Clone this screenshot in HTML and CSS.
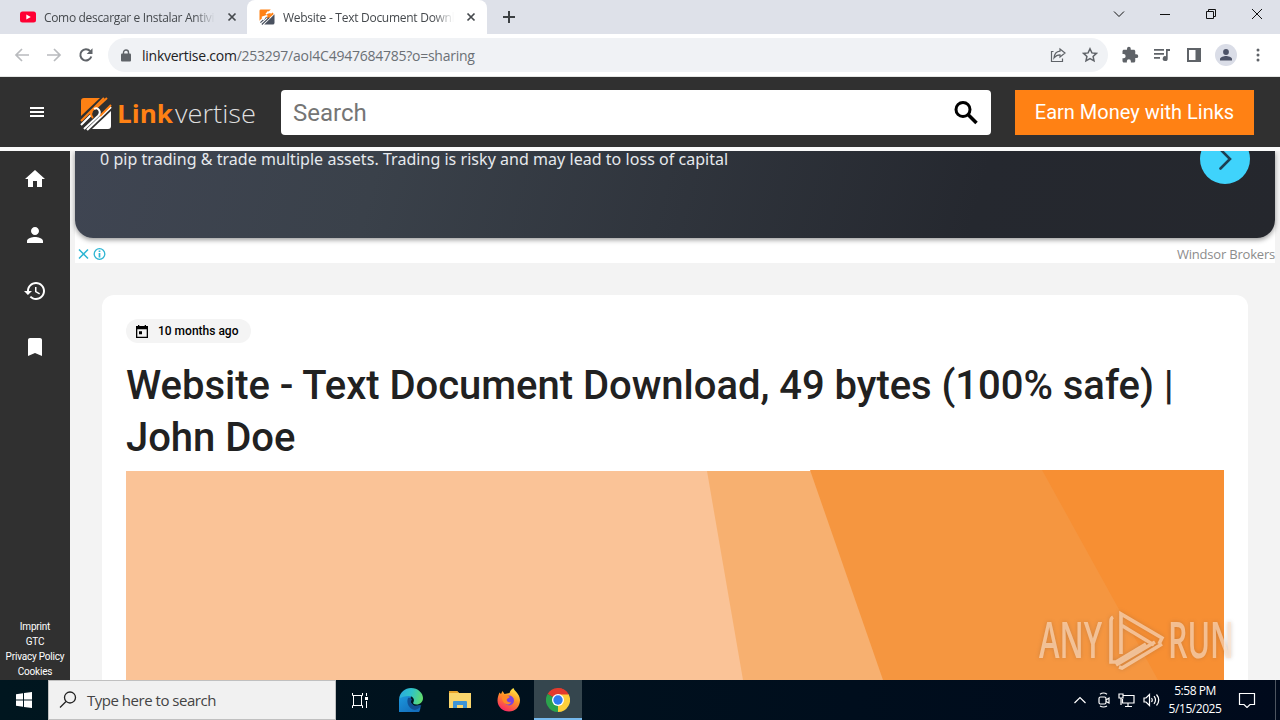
FILE: index.html
```html
<!DOCTYPE html>
<html lang="en">
<head>
    <meta charset="UTF-8">
    <meta name="viewport" content="width=device-width, initial-scale=1.0">
    <title>Website - Text Document Download</title>
    <link rel="stylesheet" href="styles.css">
</head>
<body>
    <div class="screen">
        <!-- Browser tabs -->
        <div class="tabs">
            <div class="tab">
                <svg class="favicon" width="16" height="16" viewBox="0 0 16 16"><rect y="2.500" width="16" height="11" rx="2.500" fill="#ff0033"/><path d="M6.300 5.500v5L10.800 8z" fill="#fff"/></svg>
                <span class="tab-title first-title">Como descargar e Instalar Antiviru</span>
                <svg class="tab-close" width="10" height="10" viewBox="0 0 10 10"><path d="M1.500 1.500l7 7M8.500 1.500l-7 7"/></svg>
            </div>
            <div class="tab active">
                <svg class="favicon" width="16" height="16" viewBox="0 0 34 34"><path d="M4 1h21L1 25V4q0-3 3-3z" fill="#ff8114"/><path d="M33 11v18q0 4-4 4H11z" fill="#4a5260"/><path d="M7 14l15-3-4 9 12-11" stroke="#ff8114" stroke-width="4" fill="none"/><path d="M3 29l13-12M6 33L22 18" stroke="#4a5260" stroke-width="2.500"/><path d="M6 18l8-3-5 8M20 5l-5 6" stroke="#fff" stroke-width="3" fill="none"/></svg>
                <span class="tab-title">Website - Text Document Downlo</span>
                <svg class="tab-close" width="10" height="10" viewBox="0 0 10 10"><path d="M1.500 1.500l7 7M8.500 1.500l-7 7"/></svg>
            </div>
            <svg class="new-tab" width="12" height="12" viewBox="0 0 12 12"><path d="M6 0v12M0 6h12"/></svg>
            <div class="window-buttons">
                <svg width="12" height="12" viewBox="0 0 12 12"><path d="M1 3.500l5 5 5-5"/></svg>
                <svg width="12" height="12" viewBox="0 0 12 12"><path d="M1 6.500h10"/></svg>
                <svg width="12" height="12" viewBox="0 0 12 12"><path d="M1.500 3.500h7v7h-7zM3.500 3.500v-2h7v7h-2"/></svg>
                <svg width="12" height="12" viewBox="0 0 12 12"><path d="M1 1l10 10M11 1L1 11"/></svg>
            </div>
        </div>

        <!-- Address bar -->
        <div class="toolbar">
            <div class="nav-icons">
                <svg width="16" height="16" viewBox="0 0 16 16" class="dim"><path d="M15 8H2M8 2L2 8l6 6"/></svg>
                <svg width="16" height="16" viewBox="0 0 16 16" class="dim"><path d="M1 8h13M8 2l6 6-6 6"/></svg>
                <svg width="16" height="16" viewBox="0 0 16 16"><path d="M13.300 9.500A5.600 5.600 0 1 1 12.200 4.200"/><path d="M14.500 1.200v5.800H8.700z" fill="#5f6368" stroke="none"/></svg>
            </div>
            <div class="address">
                <svg width="10" height="13" viewBox="0 0 10 13"><rect y="4.500" width="10" height="8" rx="1" fill="#5f6368"/><path d="M2.500 5V3.500a2.500 2.500 0 0 1 5 0V5" fill="none" stroke="#5f6368" stroke-width="1.400"/></svg>
                <span class="url"><b>linkvertise.com</b>/253297/aoI4C4947684785?o=sharing</span>
                <svg width="16" height="16" viewBox="0 0 16 16"><path d="M3.500 4.500h-2v10h11v-3M10 2l5 4-5 4V7.800C7 7.800 5.500 9 4 11c.4-4 2.500-6.500 6-6.800z" fill="none" stroke="#5f6368" stroke-width="1.200"/></svg>
                <svg class="star" width="16" height="16" viewBox="0 0 16 16"><path d="M8 1.800l1.900 4.100 4.500.5-3.300 3 .9 4.400L8 11.600l-4 2.200.9-4.400-3.300-3 4.500-.5z" fill="none" stroke="#5f6368" stroke-width="1.500"/></svg>
            </div>
            <div class="toolbar-icons">
                <svg width="18" height="18" viewBox="0 0 24 24"><path d="M20.500 11H19V7c0-1.100-.9-2-2-2h-4V3.500a2.500 2.500 0 0 0-5 0V5H4c-1.100 0-2 .9-2 2v3.800h1.500a2.700 2.700 0 0 1 0 5.400H2V20c0 1.100.9 2 2 2h3.800v-1.500a2.700 2.700 0 0 1 5.400 0V22H17c1.100 0 2-.9 2-2v-4h1.500a2.500 2.500 0 0 0 0-5z"/></svg>
                <svg width="18" height="16" viewBox="0 0 18 16"><path d="M1 2h10v1.700H1zM1 6h10v1.700H1zM1 10h6v1.700H1zM13 2h4v2h-2.300v7.500a2.500 2.500 0 1 1-1.700-2.300z"/></svg>
                <svg class="panel" width="14" height="14" viewBox="0 0 14 14"><path d="M0 0h14v14H0zM2 2v10h6.500V2z" fill-rule="evenodd"/></svg>
                <span class="avatar"><svg width="14" height="14" viewBox="0 0 14 14"><circle cx="7" cy="4" r="2.900"/><path d="M1 12.500V11c0-2 4-3 6-3s6 1 6 3v1.500z"/></svg></span>
                <svg class="dots" width="4" height="14" viewBox="0 0 4 14"><circle cx="2" cy="2" r="1.500"/><circle cx="2" cy="7" r="1.500"/><circle cx="2" cy="12" r="1.500"/></svg>
            </div>
        </div>

        <!-- Linkvertise header -->
        <header class="header">
            <svg class="burger" width="14" height="10" viewBox="0 0 14 10"><path d="M0 0h14v2H0zM0 4h14v2H0zM0 8h14v2H0z" fill="#fff"/></svg>
            <svg class="logo" width="178" height="36" viewBox="0 0 178 36">
                <path d="M5 2h16L2 20V5q0-3 3-3z" fill="#ff8114"/>
                <path d="M32 15v15q0 3-3 3H13z" fill="#fff"/>
                <path d="M2 25L25 2" stroke="#ff8114" stroke-width="2.200"/>
                <path d="M8 34L32 11" stroke="#fff" stroke-width="2.200"/>
                <path d="M12 20q-1-6 5-8L28 2M21 20l11-11" fill="none" stroke="#ff8114" stroke-width="2"/>
                <path d="M2 29l10-10M5 33l14-13q3-3 1-6-2-3-5-1" fill="none" stroke="#fff" stroke-width="2"/>
                <circle cx="16.500" cy="17" r="2.200" fill="#303030"/>
                <path d="M14 22q-3-3-1-7" fill="none" stroke="#ff8114" stroke-width="2"/>
                <text x="38" y="27" textLength="56" lengthAdjust="spacingAndGlyphs" class="logo-link">Link</text>
                <text x="96" y="27" textLength="81" lengthAdjust="spacingAndGlyphs" class="logo-vertise">vertise</text>
            </svg>
            <div class="search">
                <span>Search</span>
                <svg width="24" height="24" viewBox="0 0 24 24"><circle cx="9" cy="8.500" r="7" fill="none" stroke="#000" stroke-width="3"/><path d="M14 13.500l8.500 8.500" stroke="#000" stroke-width="3.500"/></svg>
            </div>
            <div class="earn">Earn Money with Links</div>
        </header>

        <div class="page">
            <nav class="sidebar">
                <svg width="24" height="24" viewBox="0 0 24 24"><path d="M10 20v-6h4v6h5v-8h3L12 3 2 12h3v8z"/></svg>
                <svg width="24" height="24" viewBox="0 0 24 24"><path d="M12 12c2.210 0 4-1.790 4-4s-1.790-4-4-4-4 1.790-4 4 1.790 4 4 4zm0 2c-2.670 0-8 1.340-8 4v2h16v-2c0-2.660-5.330-4-8-4z"/></svg>
                <svg width="24" height="24" viewBox="0 0 24 24"><path d="M13 3c-4.970 0-9 4.030-9 9H1l3.890 3.890.07.14L9 12H6c0-3.870 3.130-7 7-7s7 3.130 7 7-3.130 7-7 7c-1.930 0-3.680-.79-4.940-2.060l-1.420 1.420C8.270 19.990 10.510 21 13 21c4.970 0 9-4.030 9-9s-4.030-9-9-9zm-1 5v5l4.280 2.540.72-1.210-3.500-2.080V8H12z"/></svg>
                <svg width="24" height="24" viewBox="0 0 24 24"><path d="M17 3H7c-1.100 0-2 .9-2 2v16l7-3 7 3V5c0-1.100-.9-2-2-2z"/></svg>
                <div class="legal">
                    <span>Imprint</span>
                    <span>GTC</span>
                    <span>Privacy Policy</span>
                    <span>Cookies</span>
                </div>
            </nav>
            <main class="content">
                <section class="ad">
                    <div class="ad-banner">
                        <p>0 pip trading &amp; trade multiple assets. Trading is risky and may lead to loss of capital</p>
                        <svg width="50" height="50" viewBox="0 0 50 50"><circle cx="25" cy="25" r="25" fill="#3fd3fc"/><path d="M20.500 15.500l9.500 9.500-9.500 9.500" fill="none" stroke="#1d3f52" stroke-width="2.600" stroke-linecap="round"/></svg>
                    </div>
                    <div class="ad-footer">
                        <svg width="28" height="12" viewBox="0 0 28 12"><path d="M1 1.500l9 9M10 1.500l-9 9" stroke="#2db5d3" stroke-width="1.500"/><circle cx="21.500" cy="6" r="5.300" fill="none" stroke="#2db5d3" stroke-width="1.300"/><path d="M21.500 5v4.500M21.500 2.500v1.600" stroke="#2db5d3" stroke-width="1.700"/></svg>
                        <span>Windsor Brokers</span>
                    </div>
                </section>
                <article class="card">
                    <div class="date">
                        <svg width="12" height="13" viewBox="0 0 12 13"><path d="M0 1h2V0h1.300v1h5.400V0H10v1h2v12H0zM1.300 4.200v7.500h9.400V4.200zM3 6.300h3v3H3z" fill-rule="evenodd"/></svg>
                        <span>10 months ago</span>
                    </div>
                    <h1>Website - Text Document Download, 49 bytes (100% safe) | John Doe</h1>
                    <svg class="cover" width="1098" height="210" viewBox="0 0 1098 210">
                        <path d="M0 1h590l40 209H0z" fill="#fac397"/>
                        <path d="M581 1h110l80 209H617z" fill="#f7b070"/>
                        <path d="M684 0h414v210H757z" fill="#f59640"/>
                        <path d="M916 0h182v210h-66z" fill="#f78f33"/>
                    </svg>
                </article>
            </main>
        </div>

        <!-- Windows taskbar -->
        <footer class="taskbar">
            <div class="start"><svg width="16" height="16" viewBox="0 0 16 16"><path d="M0 2.200l7-1v6.300H0zM8 1l8-1v7.500H8zM0 8.500h7v6.300l-7-1zM8 8.500h8V16l-8-1z" fill="#fff"/></svg></div>
            <div class="task-search">
                <svg width="18" height="18" viewBox="0 0 18 18"><circle cx="11" cy="6.500" r="5.500"/><path d="M7 10.500L1 16.500"/></svg>
                <span>Type here to search</span>
            </div>
            <div class="task task-view"><svg width="18" height="17" viewBox="0 0 18 17"><path d="M1.500 1v2.500h10V1M1.500 16v-2.500h10V16M2.500 3.500v10M10.500 3.500v10M15.500 1v3M15.500 9v7" fill="none" stroke="#fff"/><path d="M14 5h3v3h-3z" fill="#fff"/></svg></div>
            <div class="task task-edge"><svg width="24" height="24" viewBox="0 0 24 24">
                <defs>
                    <linearGradient id="edgeTop" x1="0" y1="0.300" x2="1" y2="0.500"><stop offset="0" stop-color="#2aa9e0"/><stop offset="0.500" stop-color="#2fc3c8"/><stop offset="1" stop-color="#62dc6b"/></linearGradient>
                    <linearGradient id="edgeLow" x1="0" y1="0" x2="0.700" y2="1"><stop offset="0" stop-color="#1d9be0"/><stop offset="1" stop-color="#1266b5"/></linearGradient>
                </defs>
                <path d="M0 11a9 9 0 0 1 12-3l-1 6 4 4 6.500-.8A12 12 0 1 1 0 11z" fill="url(#edgeLow)"/>
                <path d="M0 11C1 4 6 0 12 0c7 0 12 5 12 10 0 4-3 6.500-6.500 6.500-3 0-4-1-3-2.500 1.500-3-1-6-4.500-6C6 8 2 9 0 11z" fill="url(#edgeTop)"/>
                <path d="M9 10c-2 5 1 11 7 12 3-.5 5-2.500 6.500-5-4 2-10 1-10.500-3 0-1 .5-2 1-2.500C12 10 10 9.500 9 10z" fill="#124f93"/>
            </svg></div>
            <div class="task"><svg width="22" height="20" viewBox="0 0 22 20"><path d="M0 1h8l2 2h12v15H0z" fill="#f9d56c"/><path d="M0 1h8l2 2H0z" fill="#e7a32a"/><path d="M4 18v-6q0-1 1-1h12q1 0 1 1v6h-4v-3H8v3z" fill="#3d94d6"/></svg></div>
            <div class="task"><svg width="24" height="24" viewBox="0 0 24 24">
                <defs><linearGradient id="fox" x1="0.800" y1="0" x2="0.300" y2="1"><stop offset="0" stop-color="#fff04a"/><stop offset="0.450" stop-color="#ff9325"/><stop offset="1" stop-color="#fa2466"/></linearGradient></defs>
                <path d="M2.500 4.500L4 6l1.500-3 2 3 5-1c1-3 2.500-4 4-5 .5 3 6 5 6.500 12 0 7-5 11.500-11 11.500S.500 19 .500 12.500c0-3 1-6 2-8z" fill="url(#fox)"/>
                <circle cx="12" cy="12.500" r="5" fill="#7b42df"/><path d="M5 8l5-1 3 2-3 2c-1 2 1 4 4 3-1 4-8 3-9-3z" fill="#ff8a25"/>
            </svg></div>
            <div class="task running"><svg width="24" height="24" viewBox="0 0 24 24">
                <path d="M12 12L1.600 6A12 12 0 0 1 22.400 6z" fill="#e33b2e"/><path d="M12 12L22.400 6A12 12 0 0 1 12 24z" fill="#fdd03b"/><path d="M12 12v12A12 12 0 0 1 1.600 6z" fill="#2ba24c"/>
                <path d="M12 6h10.400L17 14.500 12 24l4-9z" fill="#fdd03b"/><path d="M12 0a12 12 0 0 1 10.400 6.500H12z" fill="#e33b2e"/>
                <circle cx="12" cy="12" r="6" fill="#fff"/><circle cx="12" cy="12" r="4.700" fill="#2d7cf0"/>
            </svg></div>
            <div class="tray">
                <svg width="12" height="8" viewBox="0 0 12 8"><path d="M.500 7L6 1.500 11.500 7"/></svg>
                <svg width="12" height="16" viewBox="0 0 12 16"><rect x="1" y="5" width="7" height="7" rx="1.500"/><path d="M8 8l3-2v5L8 9.500M2 2.200q3.500-2.400 7 0M2 14q3.500 2 7 0"/></svg>
                <svg width="17" height="14" viewBox="0 0 17 14"><path d="M5 2.500h11v7.500H4.500V6M1 1h4v4H1zM3 5v7M10 10v3M7 13.500h7"/></svg>
                <svg width="17" height="14" viewBox="0 0 17 14"><path d="M1 5h2l3.500-3.500v11L3 9H1zM8.500 5q1.500 2 0 4M11 3.200q3 3.800 0 7.600M13.500 1.500q4.500 5.500 0 11"/></svg>
                <div class="clock"><span>5:58 PM</span><span>5/15/2025</span></div>
                <svg class="notify" width="18" height="16" viewBox="0 0 18 16"><path d="M1.500 1.500h15v11H12l-3 3-3-3H1.500z"/></svg>
            </div>
        </footer>

        <svg class="watermark" width="204" height="66" viewBox="0 0 204 66">
            <text x="3" y="50" textLength="63" lengthAdjust="spacingAndGlyphs">ANY</text>
            <text x="132" y="50" textLength="66" lengthAdjust="spacingAndGlyphs">RUN</text>
            <path d="M77 9q-2 1-2 4v41l5 0 30-18M85 46V6l41 24-3 6M85 17l33 20M126 36L86 60l-3-1M119 34L80 57"/>
        </svg>
    </div>
</body>
</html>
```
FILE: styles.css
```css
* {
    box-sizing: border-box;
}
body {
    margin: 0;
    font-family: Roboto, sans-serif;
    overflow: hidden;
}
svg {
    flex-shrink: 0;
}
.screen {
    position: relative;
    display: flex;
    flex-direction: column;
    width: 1280px;
    height: 720px;
    overflow: hidden;
}

/* browser */
.tabs {
    display: flex;
    height: 34px;
    background-color: #dee1e9;
    font-family: "Open Sans", sans-serif;
    font-size: 12px;
    color: #45494d;
}
.tab {
    display: flex;
    align-items: center;
    width: 247px;
    padding: 0 10px 0 20px;
}
.tab.active {
    width: 240px;
    padding: 0 11px 0 12px;
    background-color: #fff;
    border-radius: 8px 8px 0 0;
}
.tab-title {
    width: 171px;
    margin-left: 8px;
    overflow: hidden;
    white-space: nowrap;
    letter-spacing: -0.27px;
    -webkit-mask-image: linear-gradient(to right, #000 150px, transparent);
    mask-image: linear-gradient(to right, #000 150px, transparent);
}
.tab-title.first-title {
    letter-spacing: -0.33px;
}
.tab-close {
    margin-left: 12px;
    stroke: #45494d;
    stroke-width: 1.7;
}
.new-tab {
    margin: 11px 0 0 16px;
    stroke: #3c4043;
    stroke-width: 2;
}
.window-buttons {
    display: flex;
    gap: 34px;
    margin: 8px 17px 0 auto;
    fill: none;
    stroke: #111;
}
.toolbar {
    display: flex;
    align-items: center;
    height: 43px;
    background-color: #fff;
    border-bottom: 1px solid #e4e6e4;
}
.nav-icons {
    display: flex;
    gap: 16px;
    width: 108px;
    padding-left: 14px;
    fill: none;
    stroke: #5f6368;
    stroke-width: 2;
}
.dim {
    stroke: #b9bbbe;
    stroke-width: 1.7;
}
.address {
    display: flex;
    align-items: center;
    width: 1000px;
    height: 34px;
    padding: 0 10px 0 13px;
    border-radius: 17px;
    background-color: #f0f2f5;
}
.url {
    flex: 1;
    margin-left: 11px;
    font-family: "Open Sans", sans-serif;
    font-size: 14px;
    color: #6b7075;
    letter-spacing: -0.25px;
}
.url b {
    font-weight: normal;
    color: #202124;
}
.star {
    margin-left: 16px;
}
.toolbar-icons {
    display: flex;
    flex: 1;
    align-items: center;
    gap: 14px;
    padding-left: 13px;
    fill: #5f6368;
}
.panel {
    margin-left: 2px;
}
.avatar {
    display: flex;
    align-items: center;
    justify-content: center;
    width: 22px;
    height: 22px;
    border-radius: 50%;
    background-color: #dadde7;
    fill: #4c5267;
}
.dots {
    margin-left: 5px;
}

/* site header */
.header {
    display: flex;
    align-items: center;
    height: 70px;
    padding-top: 1px;
    background-color: #303030;
}
.burger {
    margin: 0 0 2px 30px;
}
.logo {
    margin: 2px 24px 0 35px;
}
.logo-link {
    font: 700 25px "Open Sans", sans-serif;
    fill: #ff8114;
}
.logo-vertise {
    font: 300 25px "Open Sans", sans-serif;
    fill: #dedede;
}
.search {
    display: flex;
    align-items: center;
    justify-content: space-between;
    width: 710px;
    height: 45px;
    padding: 0 13px 0 12px;
    border-radius: 4px;
    background-color: #fff;
    font-size: 24px;
    color: #757575;
}
.earn {
    width: 239px;
    height: 45px;
    margin-left: 24px;
    background-color: #ff8114;
    color: #fff;
    font-size: 20px;
    line-height: 45px;
    text-align: center;
}

/* page */
.page {
    display: flex;
    flex: 1;
    min-height: 0;
    border-top: 4px solid #fafafa;
    background-color: #f3f3f3;
}
.sidebar {
    display: flex;
    flex-direction: column;
    align-items: center;
    gap: 32px;
    width: 70px;
    padding: 16px 0 1px;
    background-color: #303030;
    fill: #fff;
}
.legal {
    display: flex;
    flex-direction: column;
    align-items: center;
    margin-top: auto;
    color: #fff;
    font-size: 10px;
    line-height: 15px;
    letter-spacing: -0.2px;
    white-space: nowrap;
}
.content {
    flex: 1;
    padding: 0 5px;
    overflow: hidden;
}
.ad {
    height: 112px;
    background-color: #fff;
}
.ad-banner {
    display: flex;
    justify-content: space-between;
    height: 87px;
    padding: 0 25px;
    border-radius: 0 0 18px 18px;
    background: linear-gradient(105deg, #3f4552 0%, #3a414a 25%, #25282f 75%, #25272d 100%);
    box-shadow: 0 2px 5px rgba(0, 0, 0, 0.4);
}
.ad-banner p {
    margin: -3px 0 0;
    color: #e6e9ed;
    font-family: "Noto Sans", sans-serif;
    font-size: 16px;
    line-height: 22px;
    letter-spacing: 0.04px;
}
.ad-banner svg {
    margin-top: -17px;
}
.ad-footer {
    display: flex;
    align-items: center;
    justify-content: space-between;
    height: 25px;
    padding: 7px 0 0 3px;
    color: #8c8c8c;
    font-family: "Open Sans", sans-serif;
    font-size: 13px;
    letter-spacing: -0.2px;
}
.card {
    height: 500px;
    margin: 32px 27px 0;
    padding: 24px;
    border-radius: 12px;
    background-color: #fff;
}
.date {
    display: flex;
    align-items: center;
    gap: 10px;
    width: 125px;
    height: 24px;
    padding-left: 10px;
    border-radius: 12px;
    background-color: #f4f4f4;
    font-size: 12px;
    font-weight: 500;
}
h1 {
    margin: 17px 0 6px;
    color: #212121;
    font-size: 40px;
    font-weight: 500;
    line-height: 52px;
    letter-spacing: -0.03px;
}
.cover {
    display: block;
}

/* taskbar */
.taskbar {
    display: flex;
    flex-shrink: 0;
    height: 40px;
    background: linear-gradient(to right, #00161f, #000a1c);
    color: #fff;
}
.start {
    display: flex;
    align-items: center;
    justify-content: center;
    width: 48px;
}
.task-search {
    display: flex;
    align-items: center;
    gap: 10px;
    width: 288px;
    padding-left: 10px;
    border: 1px solid #c0c0c0;
    background-color: #f1f1f1;
    color: #444;
    font-family: "Open Sans", sans-serif;
    font-size: 15px;
    letter-spacing: -0.48px;
    fill: none;
    stroke: #222;
    stroke-width: 1.3;
}
.task-search span {
    stroke: none;
}
.task {
    display: flex;
    align-items: center;
    justify-content: center;
    width: 49px;
}
.task-view {
    width: 48px;
}
.task-edge {
    margin-left: 2px;
}
.running {
    width: 48px;
    margin-left: 1px;
    border-bottom: 2px solid #76b9ed;
    padding-top: 2px;
    background-color: #35464e;
}
.tray {
    display: flex;
    align-items: center;
    margin: 0 4px 0 auto;
    padding-right: 19px;
    border-right: 1px solid #4d5560;
    gap: 8px;
    fill: none;
    stroke: #fff;
    stroke-width: 1.2;
}
.tray svg:first-child {
    margin-right: 4px;
}
.clock {
    display: flex;
    flex-direction: column;
    align-items: center;
    width: 54px;
    font-family: "Open Sans", sans-serif;
    font-size: 12px;
    line-height: 18px;
    letter-spacing: -0.45px;
    white-space: nowrap;
    stroke: none;
}
.notify {
    margin-left: 8px;
}

/* lies over the page corner */
.watermark {
    position: absolute;
    left: 1036px;
    top: 608px;
    fill: none;
    stroke: rgba(255, 228, 205, 0.62);
    stroke-width: 3.6;
    filter: drop-shadow(0 0 2px rgba(110, 80, 60, 0.45));
}
.watermark text {
    font: 600 50px "Open Sans", sans-serif;
    fill: rgba(255, 228, 205, 0.62);
    stroke: none;
}
```
